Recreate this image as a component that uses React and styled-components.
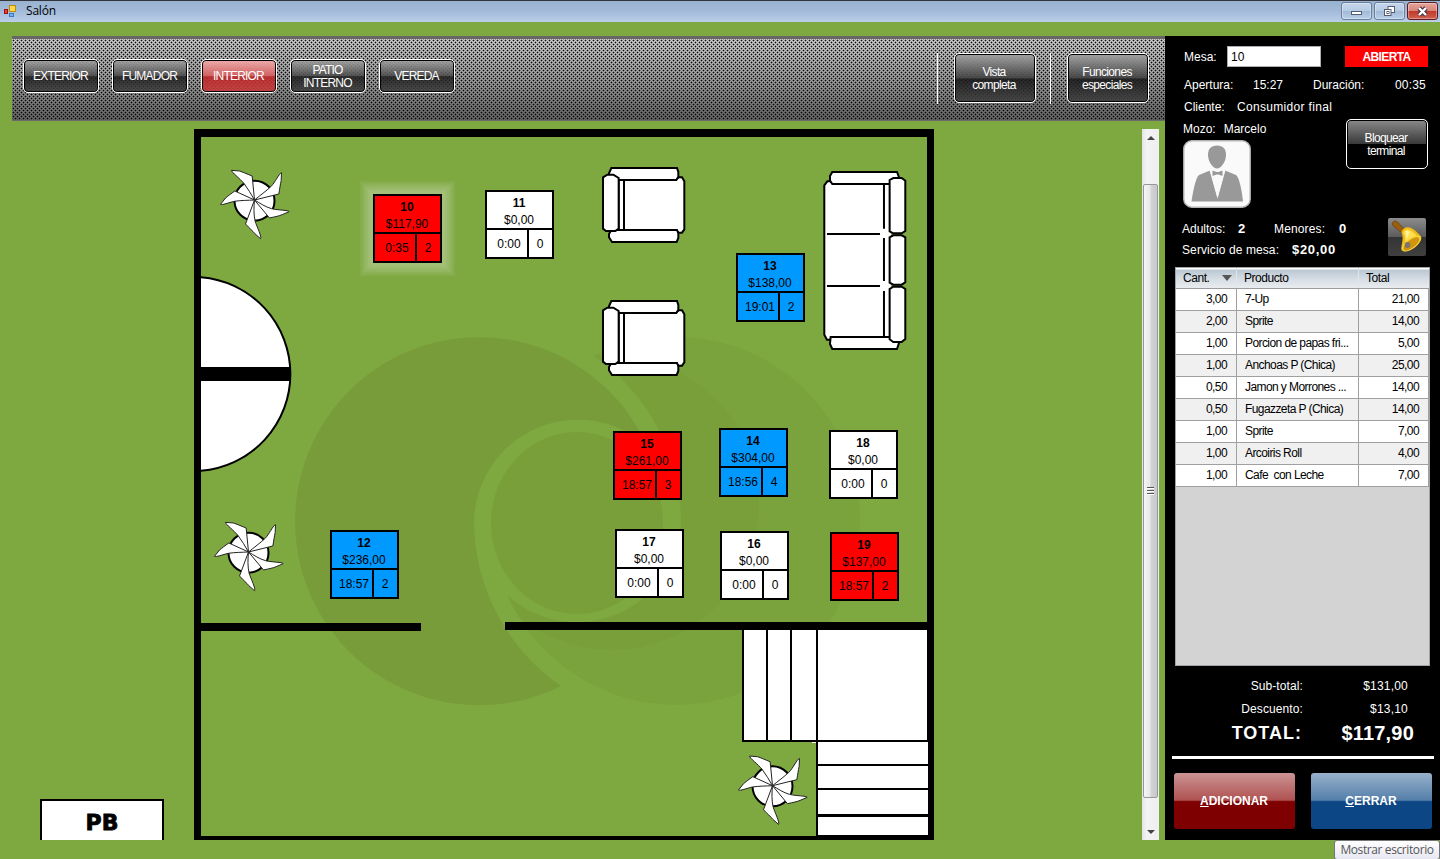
import React from "react";
import styled, { createGlobalStyle, css } from "styled-components";

const Global = createGlobalStyle`
  * { box-sizing: border-box; }
  html, body { margin: 0; padding: 0; }
  body {
    width: 1440px; height: 859px; overflow: hidden; background: #7ea840;
    font-family: "Liberation Sans", Arial, sans-serif; font-size: 12px; color: #000;
  }
  button { font-family: inherit; }
`;

const Screen = styled.div`
  position: relative; width: 1440px; height: 859px; overflow: hidden;
  display: flex; flex-direction: column; background: #7ea840;
`;
const TitleBar = styled.header`
  flex: none; height: 22px; display: flex; align-items: center; padding: 0 2px 0 3px;
  border-top: 1px solid #32363c;
  background: linear-gradient(#98b2cf, #a2bad8 45%, #b9cfea);
`;
const AppName = styled.span`
  flex: 1; margin: -1px 0 1px 9px; font: 12px/20px "Open Sans", "Noto Sans", sans-serif; letter-spacing: -0.2px;
`;
const Caption = styled.button`
  width: 31px; height: 18px; margin: -1px 0 0 2px; padding: 0; border-radius: 3px;
  display: flex; align-items: center; justify-content: center;
  border: 1px solid ${p => (p.$close ? "#5b1a22" : "#6b7f99")};
  background: ${p => p.$close
    ? "linear-gradient(#e5a59b, #d98579 48%, #c0392b 50%, #d0604c)"
    : "linear-gradient(#c5d7ec, #b7cbe4 48%, #a1b9d6 50%, #b9d0ea)"};
  box-shadow: inset 0 0 0 1px rgba(255,255,255,.35);
`;
const Body = styled.div`
  display: flex; height: 804px; margin-top: 14px; padding-left: 12px;
`;
const Main = styled.main`
  width: 1153px; display: flex; flex-direction: column;
`;
const Toolbar = styled.nav`
  height: 85px; display: flex; align-items: flex-start; padding: 0 16px 0 11px;
  border-top: 3px solid #666; border-bottom: 1px solid #6a6a6a;
  background:
    radial-gradient(circle at 1.5px 1.5px, rgba(0,0,0,.95) 0.5px, rgba(0,0,0,.32) 0.9px, rgba(0,0,0,.32) 1.1px, transparent 1.3px) 0 0 / 4px 4px,
    radial-gradient(circle at 1.5px 1.5px, rgba(0,0,0,.95) 0.5px, rgba(0,0,0,.32) 0.9px, rgba(0,0,0,.32) 1.1px, transparent 1.3px) 2px 2px / 4px 4px,
    linear-gradient(#d2d2d2, #a0a0a0 50%, #686868);
`;
const glass = css`
  border: 1px solid #fff; border-radius: 5px; color: #fff; padding: 0;
  font-size: 12px; line-height: 13px; text-align: center;
  display: flex; align-items: center; justify-content: center;
  box-shadow: inset 0 0 0 1px #000;
`;
const AreaButton = styled.button`
  ${glass}
  width: 76px; height: 34px; margin: 20px 13px 0 0; letter-spacing: -0.8px;
  padding: ${p => (p.$tall ? 2 : 0)}px 1px 0 0;
  background: ${p => p.$active
    ? "linear-gradient(rgba(240,175,175,.96), rgba(214,95,95,.94) 50%, rgba(190,40,40,.9) 52%, rgba(200,60,60,.9))"
    : "linear-gradient(rgba(165,165,165,.92), rgba(75,75,75,.9) 50%, rgba(30,30,30,.88) 52%, rgba(65,65,65,.86))"};
`;
const ActionButton = styled.button`
  ${glass}
  flex: none; width: 82px; height: 50px; letter-spacing: -0.65px; padding: 2px 2px 0 0;
  margin-top: ${p => p.$top || 0}px;
  background: ${p => p.$solid
    ? "linear-gradient(#8a8a8a, #3a3a3a 49%, #000 50%, #000)"
    : "linear-gradient(rgba(165,165,165,.94), rgba(65,65,65,.92) 50%, rgba(25,25,25,.9) 52%, rgba(65,65,65,.88))"};
`;
const Spacer = styled.div`flex: 1;`;
const Divider = styled.i`width: 1px; height: 51px; margin: 14px 16px 0 ${p => p.$left}px; background: #fff;`;

const FloorArea = styled.section`
  display: flex; height: 711px; margin-top: 8px;
`;
const Floor = styled.div`
  position: relative; width: 1130px; height: 711px; overflow: hidden;
`;
const Drawing = styled.svg`display: block;`;
const glow = [3, 5, 7, 9, 11, 13].map(s => `0 0 1px ${s}px rgba(255,255,255,.06)`).join(",");
const TableBox = styled.div`
  position: absolute; left: ${p => p.$x - 12}px; top: ${p => p.$y - 129}px;
  width: 69px; height: 69px; border: 2px solid #000; background: #000;
  display: grid; grid-template: 36px 27px / 40px 23px; gap: 2px;
  box-shadow: ${p => (p.$glow ? glow : "none")};
  > * { background: ${p => p.$color}; }
`;
const TableTop = styled.div`
  grid-column: 1 / 3; text-align: center; line-height: 16px; padding-top: 2px;
  b { display: block; line-height: 18px; padding-right: 1px; }
  span { display: block; padding-right: 1px; }
`;
const TableCell = styled.div`
  text-align: center; height: 27px; line-height: 28px; white-space: nowrap; overflow: hidden;
  padding: 0 ${p => p.$r || 0}px 0 ${p => p.$l || 0}px;
`;
const LevelBadge = styled.div`
  position: absolute; left: 28px; top: 670px; width: 124px; height: 42px;
  border: 2px solid #000; border-bottom: 0; background: #fff;
  text-align: center; font: bold 22px/43px "DejaVu Sans", sans-serif;
  -webkit-text-stroke: 0.8px #000;
`;

const ScrollBar = styled.div`
  width: 17px; height: 711px; background: linear-gradient(90deg, #e3e3e3, #f3f3f3 25%, #efefef);
  display: flex; flex-direction: column; align-items: center;
`;
const Arrow = styled.i`
  width: 0; height: 0; margin: ${p => (p.$down ? "32px 0 0" : "7px 0 44px")};
  border: 4px solid transparent;
  ${p => (p.$down ? "border-top-color: #444; border-bottom: 0;" : "border-bottom-color: #444; border-top: 0;")}
`;
const Thumb = styled.div`
  width: 15px; height: 614px; border: 1px solid #979797; border-radius: 2px;
  background: linear-gradient(90deg, #f5f5f5, #e8e8ea 45%, #d2d3d6 55%, #c6c8cc);
  display: flex; flex-direction: column; gap: 1px; align-items: center; justify-content: center;
  i { width: 7px; height: 2px; background: #555; border-bottom: 1px solid #fff; }
`;

const Panel = styled.aside`
  width: 275px; height: 804px; background: #000; color: #fff;
  display: flex; flex-direction: column;
`;
const Row = styled.div`
  display: flex; align-items: center; height: ${p => p.$h}px; padding-left: ${p => p.$l || 19}px;
  padding-top: ${p => p.$pt || 0}px; white-space: nowrap; font-size: 12px;
`;
const Txt = styled.span`
  flex: none; width: ${p => (p.$w ? p.$w + "px" : "auto")};
  letter-spacing: ${p => p.$ls || 0}px; text-align: ${p => (p.$right ? "right" : "left")};
`;
const Strong = styled.b`
  flex: none; width: ${p => p.$w}px; font-size: 13px; letter-spacing: .7px;
`;
const MesaInput = styled.div`
  width: 94px; height: 21px; background: #fff; color: #000; border: 1px solid #abadb3;
  line-height: 20px; padding-left: 3px;
`;
const Status = styled.div`
  width: 83px; height: 21px; margin-left: 24px; background: #f00; text-align: center;
  font-weight: bold; line-height: 22px; letter-spacing: -0.6px;
`;
const WaiterRow = styled.div`
  display: flex; justify-content: space-between; height: 90px; padding: 0 12px 0 18px;
`;
const Waiter = styled.div`
  display: flex; flex-direction: column;
  svg { display: block; }
`;
const WaiterName = styled.div`
  height: 21px; line-height: 20px; display: flex; gap: 8px;
`;
const Guests = styled.div`
  display: flex; height: 50px; margin-top: 8px;
`;
const GuestText = styled.div`
  width: 223px; padding-top: 1px;
`;
const BellButton = styled.button`
  width: 38px; height: 38px; margin-top: 1px; padding: 0; border: 0; border-radius: 2px;
  background: linear-gradient(#8c8c8c, #5c5c5c 49%, #343434 50%, #404040);
  svg { display: block; }
`;
const Grid = styled.div`
  width: 255px; height: 399px; margin: 0 0 0 10px; background: #d3d3d3; color: #000;
  border: 1px solid #a0a4a8; letter-spacing: -0.58px;
`;
const HeadRow = styled.div`
  display: grid; grid-template-columns: 61px 122px 70px; height: 21px; line-height: 20px;
  background: linear-gradient(#fff 0, #fff 1px, #b9c7d3 2px, #d3dbe2 50%, #e9ecef);
  border-bottom: 1px solid #9c9c9c;
`;
const HeadCell = styled.div`
  display: flex; justify-content: space-between; align-items: center; letter-spacing: -0.45px;
  padding-left: 7px; padding-right: 4px; border-right: 1px solid #dfe4e8;
  &:last-child { border-right: 0; }
`;
const SortMark = styled.i`
  border: 5px solid transparent; border-top: 6px solid #555; border-bottom: 0;
`;
const ItemRow = styled.div`
  display: grid; grid-template-columns: 61px 122px 70px; height: 22px; line-height: 21px;
  background: ${p => (p.$odd ? "#f0f0f0" : "#fff")};
`;
const ItemCell = styled.div`
  border-right: 1px solid #a0a0a0; border-bottom: 1px solid #a0a0a0; white-space: pre;
  text-align: ${p => (p.$right ? "right" : "left")};
  padding: 0 9px 0 8px;
`;
const SumRow = styled.div`
  display: flex; height: ${p => p.$h}px; align-items: center; font-size: 12px;
  margin-top: ${p => p.$mt || 0}px; letter-spacing: .2px;
  span:first-child { width: 138px; text-align: right; letter-spacing: .1px; }
  span:last-child { width: 105px; text-align: right; }
  ${p => p.$total && css`
    font-weight: bold; font-size: 20px;
    span:first-child { width: 137px; font-size: 18px; letter-spacing: 1px; }
    span:last-child { width: 112px; }
  `}
`;
const Rule = styled.div`width: 262px; height: 3px; margin: 11px 0 0 7px; background: #fff;`;
const Footer = styled.div`display: flex; gap: 16px; margin: 14px 0 0 9px;`;
const BigButton = styled.button`
  width: 121px; height: 56px; border: 0; border-radius: 3px; color: #fff; padding: 0 1px 0 0;
  font-size: 12px; font-weight: bold;
  background: ${p => p.$blue
    ? "linear-gradient(#98b1cc, #5580aa 48%, #3d6c9c 50%, #0d4684 51%, #0d4684)"
    : "linear-gradient(#cc9494, #b05252 48%, #9c3030 50%, #7e0000 51%, #7e0000)"};
`;
const Tooltip = styled.div`
  position: absolute; right: 0; bottom: -1px; width: 106px; height: 20px;
  border: 1px solid #767676; border-radius: 3px; background: linear-gradient(#fff, #e6e7f1);
  color: #575757; text-align: center; font: 12px/17px "Open Sans", "Noto Sans", sans-serif;
  white-space: nowrap; letter-spacing: -0.4px;
`;

const Plant = ({ x, y }) => (
  <g transform={`translate(${x} ${y}) scale(.3333) translate(-193 -240)`} fill="#fff" stroke="#222" strokeWidth="3" strokeLinejoin="round">
    <circle cx="193" cy="242" r="60" stroke="#000" strokeWidth="6" />
    <path d="M193 240L186 168C168 161 158 156 148 153L124 151C124 157 150 176 162 191C173 206 184 224 193 240Z" />
    <path d="M193 240L266 222C269 205 270 195 273 182L274 158C266 161 256 186 242 200C228 213 210 226 193 240Z" />
    <path d="M193 240L238 294C255 290 268 288 276 284L297 275C295 270 264 271 244 266C226 261 210 250 193 240Z" />
    <path d="M193 240L166 312C178 325 187 332 194 341L211 356C216 352 200 320 195 304C190 284 191 260 193 240Z" />
    <path d="M193 240L134 213C122 221 115 227 106 234L91 253C95 256 116 248 132 244C152 241 173 241 193 240Z" />
  </g>
);

const Chair = ({ dy }) => (
  <g transform={`translate(590 ${150 + dy}) scale(.3333)`} fill="#fff" stroke="#000" strokeWidth="6">
    <path d="M86 90H255L266 82H276L283 94V238L276 248H266L258 240H86Z" />
    <path d="M64 54H261L265 66V80L259 90H70L57 76V70Z" />
    <path d="M64 240H261L265 250V264L260 276H66L57 262V252Z" />
    <path d="M39 82L52 74H70L86 84V236L76 243H48L39 236Z" />
    <path d="M102 90V240" />
  </g>
);

const Sofa = () => (
  <g transform="translate(590 150) scale(.3333)" fill="#fff" stroke="#000" strokeWidth="6">
    <path d="M718 94H712L703 106V554L711 569H718L900 562V102Z" />
    <path d="M900 102V562" stroke="#fff" />
    <path d="M727 66H921L928 84L900 102H727L720 92V78Z" />
    <path d="M722 561H898L928 576L921 597H727L720 582Z" />
    <path d="M910 84H935L946 92V243L935 250H910L899 244V90Z" />
    <path d="M910 256H935L946 262V397L935 404H910L899 398V262Z" />
    <path d="M910 410H935L946 417V567L935 576H910L899 568V417Z" />
    <path d="M882 104V236M882 264V393M882 423V560M711 252H870M711 408H870" />
  </g>
);

const SWIRL = "M561 686A184 184 0 1 1 647 446A104 104 0 0 0 474 521A201 201 0 0 0 561 686Z";

const FloorPlan = () => (
  <Drawing width="1130" height="711" viewBox="12 129 1130 711">
    <defs>
      <clipPath id="rightHalf"><path d={SWIRL} transform="rotate(180 577.5 521)" /></clipPath>
    </defs>
    <path d={SWIRL} fill="#799c3a" />
    <path d={SWIRL} fill="#7aa33d" transform="rotate(180 577.5 521)" />
    <circle cx="612" cy="503" r="147" fill="#799f3b" clipPath="url(#rightHalf)" />
    <ellipse cx="577" cy="523" rx="86" ry="91" fill="#799f3b" />
    <g shapeRendering="crispEdges">
      <path fill="#fff" d="M743 630H928V837H817V741H743Z M812 741H817V743H812Z" />
      <path fill="#000" d="M194 129H934V840H194ZM201 137V836H816V742H742V630H505V622H927V137Z" fillRule="evenodd" />
      <path fill="#fff" d="M744 630H927V740H744ZM818 742H928V835H818Z" />
      <path fill="#000" d="M201 623H421V631H201ZM766 630H768V741H766ZM790 630H792V741H790ZM816 630H818V836H816ZM817 764H928V766H817ZM817 788H928V790H817ZM817 814H928V817H817Z" />
    </g>
    <path d="M201 277.300A97 97 0 0 1 201 470.700Z" fill="#fff" />
    <path d="M201 277.300A97 97 0 0 1 201 470.700" fill="none" stroke="#000" strokeWidth="2" />
    <path d="M201 367H291V381H201Z" />
    <Plant x={254.5} y={200} /><Plant x={248.5} y={552} /><Plant x={772.5} y={785.7} />
    <Chair dy={0} /><Chair dy={133} /><Sofa />
  </Drawing>
);

const RED = "#ff0000", BLUE = "#0099ff", WHITE = "#ffffff";
const TABLES = [
  [10, 373, 194, RED, "$117,90", "0:35", 2], [11, 485, 190, WHITE, "$0,00", "0:00", 0],
  [13, 736, 253, BLUE, "$138,00", "19:01", 2], [15, 613, 431, RED, "$261,00", "18:57", 3],
  [14, 719, 428, BLUE, "$304,00", "18:56", 4], [18, 829, 430, WHITE, "$0,00", "0:00", 0],
  [12, 330, 530, BLUE, "$236,00", "18:57", 2], [17, 615, 529, WHITE, "$0,00", "0:00", 0],
  [16, 720, 531, WHITE, "$0,00", "0:00", 0], [19, 830, 532, RED, "$137,00", "18:57", 2],
];
const ITEMS = [
  ["3,00", "7-Up", "21,00"], ["2,00", "Sprite", "14,00"], ["1,00", "Porcion de papas fri...", "5,00"],
  ["1,00", "Anchoas P (Chica)", "25,00"], ["0,50", "Jamon y Morrones ...", "14,00"],
  ["0,50", "Fugazzeta P (Chica)", "14,00"], ["1,00", "Sprite", "7,00"],
  ["1,00", "Arcoiris Roll", "4,00"], ["1,00", "Cafe  con Leche", "7,00"],
];
const AREAS = ["EXTERIOR", "FUMADOR", "INTERIOR", "PATIO INTERNO", "VEREDA"];

const AppIcon = () => (
  <svg width="14" height="14" viewBox="0 0 14 14">
    <rect x="6.5" y="0.5" width="6" height="6" fill="#ffd84a" stroke="#b98a10" />
    <rect x="1.5" y="4.5" width="3" height="4" fill="#e04040" stroke="#a01010" />
    <rect x="6.5" y="8.5" width="4" height="3" fill="#6fb0f0" stroke="#3a78c8" />
  </svg>
);
const Avatar = () => (
  <svg width="68" height="68" viewBox="0 0 68 68">
    <rect x=".8" y=".8" width="66.4" height="66.4" rx="8" fill="#fafafa" stroke="#b4b4b4" strokeWidth="1.4" />
    <path fill="#999" d="M34 5.500C40 5.500 43 9 43 15C43 21 38.500 28.500 34 28.500C29.500 28.500 25 21 25 15C25 9 28 5.500 34 5.500Z" />
    <path fill="#999" d="M27 30.500L16 35C13 37 10 51 8.500 61.500H60C59 50 56 37 53 35L42 30.500L34.500 58Z" />
    <path fill="#fafafa" d="M26.500 30L34.500 58.500L42.500 30Z" />
    <path fill="#999" d="M29.500 30.500L33.500 32H35.500L39.500 30.500V36L35.500 34.500H33.500L29.500 36Z" />
  </svg>
);
const Bell = () => (
  <svg width="38" height="38" viewBox="0 0 38 38">
    <path d="M4.500 4.500C6 2.500 8.500 2.700 10 4.500L17 12L14 15L6.500 9C4.500 7.500 3.800 6 4.500 4.500Z" fill="#9a5f0e" stroke="#5f3905" strokeWidth=".6" />
    <path d="M13.500 14.500C14 11.500 16.500 9 20 9.300C25 9.800 29 14 33 18.500C34.500 21.500 31 26 26.500 29.500C21.500 33 16 34.500 13.500 32C12.500 29 16.500 20 13.500 14.500Z" fill="#f0bd18" />
    <path d="M15.500 15C16 12.500 18 11 20 11.500C23.500 12.500 26 15 28.500 17.500C24.500 19 20 23.500 17 27.500C18 22.500 17.500 18 15.500 15Z" fill="#ffe150" />
    <path d="M17.500 13.500C19 12 20.500 13 21.500 14.500C20.500 17 19 19.500 18.500 21.500C18.500 18.500 18.500 16 17.500 13.500Z" fill="#fff3a8" />
    <ellipse cx="23.300" cy="25.500" rx="11.200" ry="5.200" transform="rotate(-37 23.300 25.500)" fill="#f7d23a" />
    <ellipse cx="23.300" cy="25.900" rx="9.600" ry="3.900" transform="rotate(-37 23.300 25.900)" fill="#cf9410" />
    <circle cx="19.500" cy="27" r="2.900" fill="#7c766a" />
  </svg>
);

export default function App() {
  return (
    <Screen>
      <Global />
      <TitleBar>
        <AppIcon />
        <AppName>Salón</AppName>
        <Caption><svg width="13" height="10"><rect x="1.500" y="5.500" width="10" height="3" fill="#fff" stroke="#535c70" /></svg></Caption>
        <Caption>
          <svg width="13" height="12" fill="#fff" stroke="#535c70">
            <rect x="5" y="1.500" width="6.500" height="6" /><rect x="1.500" y="4.500" width="6.500" height="6" /><rect x="4" y="6.500" width="2" height="2" />
          </svg>
        </Caption>
        <Caption $close>
          <svg width="13" height="11"><path d="M3 2L10 9M10 2L3 9" stroke="#4a3a44" strokeWidth="4.600" /><path d="M3 2L10 9M10 2L3 9" stroke="#fff" strokeWidth="2.400" /></svg>
        </Caption>
      </TitleBar>
      <Body>
        <Main>
          <Toolbar>
            {AREAS.map(a => (
              <AreaButton key={a} $active={a === "INTERIOR"} $tall={a.includes(" ")}>{a}</AreaButton>
            ))}
            <Spacer />
            <Divider $left={0} />
            <ActionButton $top={14}>Vista<br />completa</ActionButton>
            <Divider $left={14} />
            <ActionButton $top={14}>Funciones<br />especiales</ActionButton>
          </Toolbar>
          <FloorArea>
            <Floor>
              <FloorPlan />
              {TABLES.map(([n, x, y, c, total, time, guests]) => (
                <TableBox key={n} $x={x} $y={y} $color={c} $glow={n === 10}>
                  <TableTop><b>{n}</b><span>{total}</span></TableTop>
                  <TableCell $l={4}>{time}</TableCell>
                  <TableCell $r={1}>{guests}</TableCell>
                </TableBox>
              ))}
              <LevelBadge>PB</LevelBadge>
            </Floor>
            <ScrollBar>
              <Arrow />
              <Thumb><i /><i /><i /></Thumb>
              <Arrow $down />
            </ScrollBar>
          </FloorArea>
        </Main>
        <Panel>
          <Row $h={41}>
            <Txt $w={43}>Mesa:</Txt><MesaInput>10</MesaInput><Status>ABIERTA</Status>
          </Row>
          <Row $h={16}>
            <Txt $w={69}>Apertura:</Txt><Txt $w={60}>15:27</Txt><Txt $w={73}>Duración:</Txt><Txt $w={40} $right $ls={0.2}>00:35</Txt>
          </Row>
          <Row $h={26} $pt={2}><Txt $w={53}>Cliente:</Txt><Txt $ls={0.32}>Consumidor final</Txt></Row>
          <WaiterRow>
            <Waiter>
              <WaiterName><span>Mozo:</span><span>Marcelo</span></WaiterName>
              <Avatar />
            </Waiter>
            <ActionButton $solid>Bloquear<br />terminal</ActionButton>
          </WaiterRow>
          <Guests>
            <GuestText>
              <Row $h={21} $l={17}><Txt $w={56}>Adultos:</Txt><Strong $w={36}>2</Strong><Txt $w={65} $ls={0.15}>Menores:</Txt><Strong $w={20}>0</Strong></Row>
              <Row $h={21} $l={17}><Txt $w={110} $ls={0.1}>Servicio de mesa:</Txt><Strong $w={60}>$20,00</Strong></Row>
            </GuestText>
            <BellButton><Bell /></BellButton>
          </Guests>
          <Grid>
            <HeadRow>
              <HeadCell>Cant.<SortMark /></HeadCell><HeadCell>Producto</HeadCell><HeadCell>Total</HeadCell>
            </HeadRow>
            {ITEMS.map(([q, name, t], i) => (
              <ItemRow key={i} $odd={i % 2 === 1}>
                <ItemCell $right>{q}</ItemCell><ItemCell>{name}</ItemCell><ItemCell $right>{t}</ItemCell>
              </ItemRow>
            ))}
          </Grid>
          <SumRow $h={22} $mt={9}><span>Sub-total:</span><span>$131,00</span></SumRow>
          <SumRow $h={24}><span>Descuento:</span><span>$13,10</span></SumRow>
          <SumRow $h={24} $total><span>TOTAL:</span><span>$117,90</span></SumRow>
          <Rule />
          <Footer>
            <BigButton><u>A</u>DICIONAR</BigButton>
            <BigButton $blue><u>C</u>ERRAR</BigButton>
          </Footer>
        </Panel>
      </Body>
      <Tooltip>Mostrar escritorio</Tooltip>
    </Screen>
  );
}
